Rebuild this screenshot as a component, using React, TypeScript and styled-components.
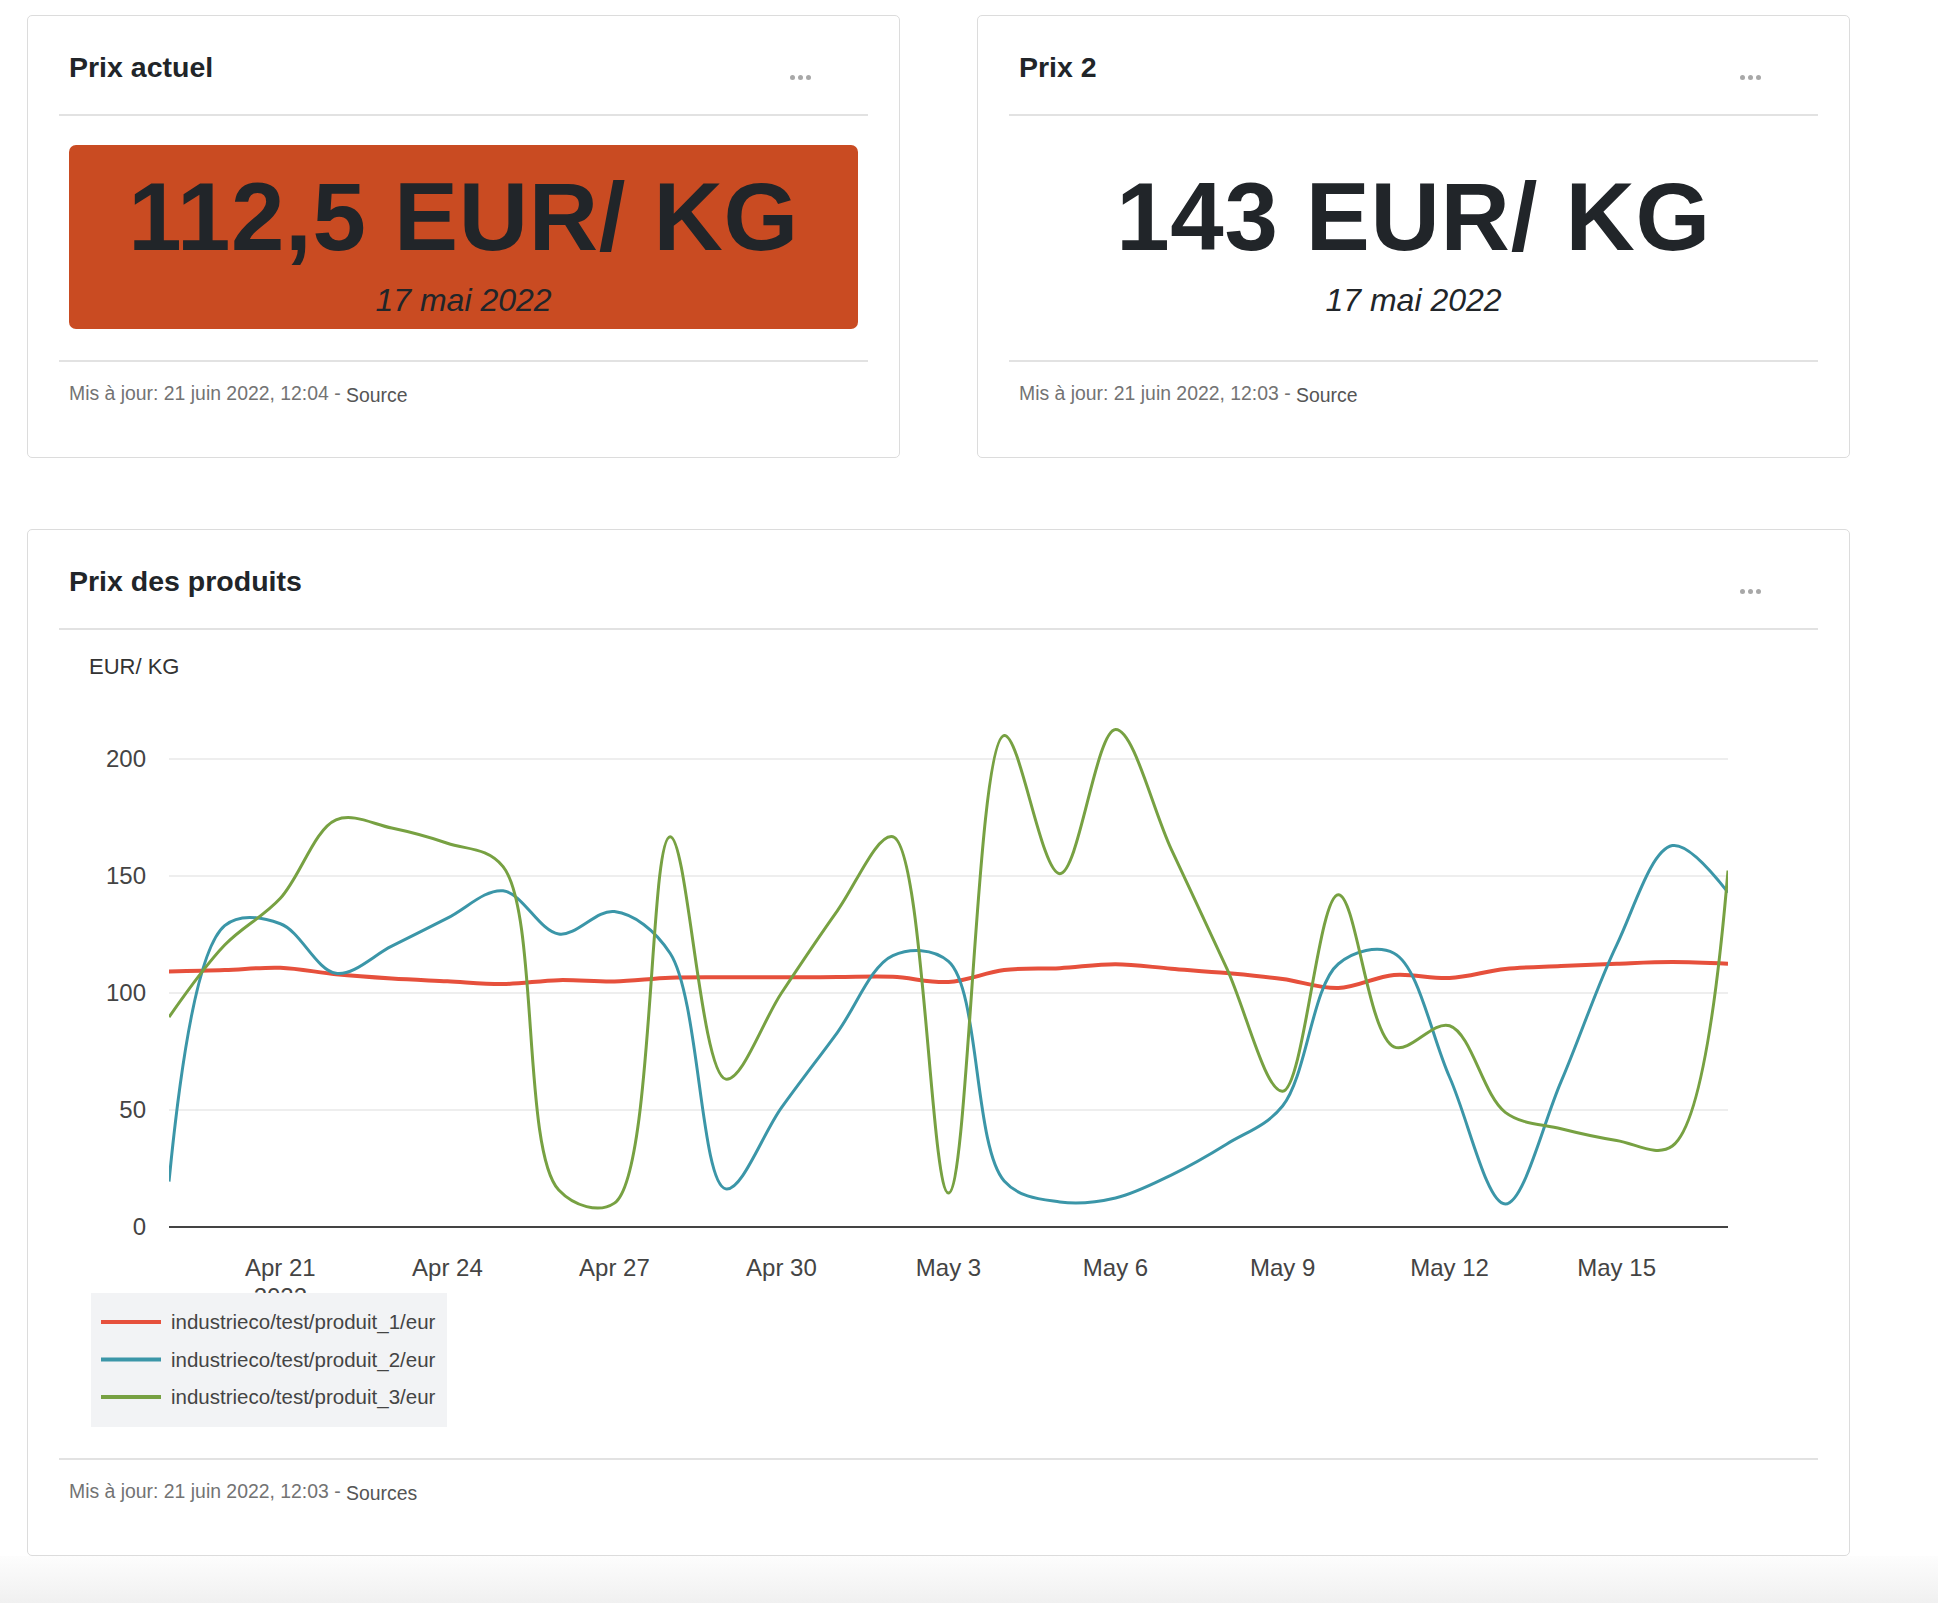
import styled, { createGlobalStyle } from "styled-components";

const GlobalStyle = createGlobalStyle`
  html, body {
    margin: 0;
    padding: 0;
    background: #fff;
  }
  body {
    font-family: "Liberation Sans", Arial, Helvetica, sans-serif;
    color: #212529;
  }
`;

type Pt = [number, number];

const COLORS = {
  p1: "#e6503c",
  p2: "#3b96a8",
  p3: "#77a142",
};

// one value per day, Apr 19 -> May 17
const SERIES = [
  {
    name: "industrieco/test/produit_1/eur",
    color: COLORS.p1,
    width: 4,
    values: [
      109.2, 109.8, 110.8, 108, 106.2, 105, 103.8, 105.5, 104.9, 106.5, 106.7,
      106.7, 106.8, 106.9, 104.7, 109.8, 110.6, 112.3, 110.4, 108.5, 106, 102.1,
      107.7, 106.4, 110.3, 111.5, 112.5, 113.2, 112.5,
    ],
  },
  {
    name: "industrieco/test/produit_2/eur",
    color: COLORS.p2,
    width: 3,
    values: [
      19.4, 128.8, 129.6, 108.4, 120, 132, 143.7, 125.2, 134.8, 117, 16.3, 51,
      83, 116, 113.5, 19.7, 10.7, 12.4, 22.2, 35.5, 51.7, 112.4, 117, 64, 9.8,
      62, 120.5, 163, 143,
    ],
  },
  {
    name: "industrieco/test/produit_3/eur",
    color: COLORS.p3,
    width: 3,
    values: [
      89.7, 120.5, 140.5, 174, 170.5, 164, 154, 15.8, 10.2, 166.8, 63.2, 100,
      135, 166.8, 14.5, 210, 151, 212.6, 161.5, 110.4, 58, 142, 77, 86, 49, 42,
      37, 34.6, 152.3,
    ],
  },
];

const TICKS = [
  { i: 2, label: "Apr 21" },
  { i: 5, label: "Apr 24" },
  { i: 8, label: "Apr 27" },
  { i: 11, label: "Apr 30" },
  { i: 14, label: "May 3" },
  { i: 17, label: "May 6" },
  { i: 20, label: "May 9" },
  { i: 23, label: "May 12" },
  { i: 26, label: "May 15" },
];

const CHART_W = 1759;
const CHART_H = 828;
const X0 = 110;
const X1 = 1669;
const Y0 = 597;
const PER_UNIT = 2.34;

const xAt = (i: number) => X0 + (i * (X1 - X0)) / 28;
const yAt = (v: number) => Y0 - v * PER_UNIT;

// same smoothing as plotly's "spline" line shape
function tangent(p0: Pt, p1: Pt, p2: Pt): [Pt, Pt] {
  const d1x = p0[0] - p1[0];
  const d1y = p0[1] - p1[1];
  const d2x = p2[0] - p1[0];
  const d2y = p2[1] - p1[1];
  const d1a = Math.pow(d1x * d1x + d1y * d1y, 0.25);
  const d2a = Math.pow(d2x * d2x + d2y * d2y, 0.25);
  const numx = d2a * d2a * d1x - d1a * d1a * d2x;
  const numy = d2a * d2a * d1y - d1a * d1a * d2y;
  const den1 = 3 * d2a * (d1a + d2a);
  const den2 = 3 * d1a * (d1a + d2a);
  return [
    [p1[0] + (den1 && numx / den1), p1[1] + (den1 && numy / den1)],
    [p1[0] - (den2 && numx / den2), p1[1] - (den2 && numy / den2)],
  ];
}

function smoothPath(pts: Pt[]) {
  const t: [Pt, Pt][] = [];
  for (let i = 1; i < pts.length - 1; i++) t.push(tangent(pts[i - 1], pts[i], pts[i + 1]));
  const f = (p: Pt) => `${p[0].toFixed(2)},${p[1].toFixed(2)}`;
  let d = `M${f(pts[0])}Q${f(t[0][0])} ${f(pts[1])}`;
  for (let i = 2; i < pts.length - 1; i++) {
    d += `C${f(t[i - 2][1])} ${f(t[i - 1][0])} ${f(pts[i])}`;
  }
  d += `Q${f(t[pts.length - 3][1])} ${f(pts[pts.length - 1])}`;
  return d;
}

function PriceChart() {
  return (
    <ChartSvg width={CHART_W} height={CHART_H}>
      <defs>
        <clipPath id="plot-area">
          <rect x={X0} y={0} width={X1 - X0} height={Y0 + 4} />
        </clipPath>
      </defs>
      <text x={30} y={44} fontSize={22} fill="#333">
        EUR/ KG
      </text>
      {[200, 150, 100, 50].map((v) => (
        <line key={v} x1={X0} x2={X1} y1={yAt(v)} y2={yAt(v)} stroke="#eee" strokeWidth={2} />
      ))}
      {[200, 150, 100, 50, 0].map((v) => (
        <text key={v} x={87} y={yAt(v) + 8} fontSize={24} fill="#444" textAnchor="end">
          {v}
        </text>
      ))}
      {TICKS.map((t) => (
        <text key={t.label} x={xAt(t.i)} y={646} fontSize={24} fill="#444" textAnchor="middle">
          {t.label}
        </text>
      ))}
      <text x={xAt(2)} y={675} fontSize={24} fill="#444" textAnchor="middle">
        2022
      </text>
      <g clipPath="url(#plot-area)">
        {SERIES.map((s) => (
          <path
            key={s.name}
            d={smoothPath(s.values.map((v, i) => [xAt(i), yAt(v)] as Pt))}
            fill="none"
            stroke={s.color}
            strokeWidth={s.width}
            strokeLinejoin="round"
          />
        ))}
      </g>
      <line x1={X0} x2={X1} y1={Y0} y2={Y0} stroke="#444" strokeWidth={2} />
      <rect x={32} y={663} width={356} height={134} fill="#f2f3f5" />
      {SERIES.map((s, k) => (
        <g key={s.name}>
          <line x1={42} x2={102} y1={692 + k * 37.5} y2={692 + k * 37.5} stroke={s.color} strokeWidth={4} />
          <text x={112} y={699 + k * 37.5} fontSize={20.5} fill="#444">
            {s.name}
          </text>
        </g>
      ))}
    </ChartSvg>
  );
}

function Dots() {
  return (
    <Menu type="button" aria-label="menu">
      <Dot />
      <Dot />
      <Dot />
    </Menu>
  );
}

function CardFooter({ updated, link }: { updated: string; link: string }) {
  return (
    <Footer>
      Mis à jour: {updated} - <SourceLink>{link}</SourceLink>
    </Footer>
  );
}

export default function App() {
  return (
    <Page>
      <GlobalStyle />
      <Content>
        <Row>
          <Card>
            <Header>
              <Title>Prix actuel</Title>
              <Dots />
            </Header>
            <Body>
              <PriceBox $alert>
                <Value>112,5 EUR/ KG</Value>
                <DateLine>17 mai 2022</DateLine>
              </PriceBox>
            </Body>
            <CardFooter updated="21 juin 2022, 12:04" link="Source" />
          </Card>
          <Card>
            <Header>
              <Title>Prix 2</Title>
              <Dots />
            </Header>
            <Body>
              <PriceBox>
                <Value>143 EUR/ KG</Value>
                <DateLine>17 mai 2022</DateLine>
              </PriceBox>
            </Body>
            <CardFooter updated="21 juin 2022, 12:03" link="Source" />
          </Card>
        </Row>
        <Card>
          <Header>
            <Title>Prix des produits</Title>
            <Dots />
          </Header>
          <ChartBody>
            <PriceChart />
          </ChartBody>
          <CardFooter updated="21 juin 2022, 12:03" link="Sources" />
        </Card>
      </Content>
      <BottomFade />
    </Page>
  );
}

const Page = styled.div`
  min-height: 100vh;
  display: flex;
  flex-direction: column;
  overflow: hidden;
`;

const Content = styled.main`
  width: 1823px;
  padding: 15px 0 0 27px;
  display: flex;
  flex-direction: column;
  gap: 71px;
`;

const Row = styled.div`
  display: grid;
  grid-template-columns: 873px 873px;
  column-gap: 77px;
`;

const Card = styled.section`
  background: #fff;
  border: 1px solid #dcdcdc;
  border-radius: 5px;
`;

const Header = styled.header`
  margin: 0 31px;
  padding: 34px 10px 30px;
  border-bottom: 2px solid #e2e2e2;
  display: flex;
  align-items: center;
  justify-content: space-between;
`;

const Title = styled.h2`
  margin: 0;
  font-size: 28.5px;
  line-height: 34px;
  font-weight: 700;
  color: #212529;
`;

const Menu = styled.button`
  margin: 20px 47px 0 0;
  padding: 0;
  border: 0;
  background: none;
  display: flex;
  gap: 3px;
  cursor: pointer;
`;

const Dot = styled.span`
  width: 5px;
  height: 5px;
  border-radius: 50%;
  background: #a8a8a8;
`;

const Body = styled.div`
  margin: 0 31px;
  padding: 29px 10px 31px;
`;

const PriceBox = styled.div<{ $alert?: boolean }>`
  box-sizing: border-box;
  height: 184px;
  padding-top: 24px;
  border-radius: 7px;
  background: ${(p) => (p.$alert ? "#c94b22" : "transparent")};
  text-align: center;
  color: #212529;
`;

const Value = styled.div`
  font-size: 96px;
  line-height: 95px;
  font-weight: 700;
  letter-spacing: 0.7px;
`;

const DateLine = styled.div`
  margin-top: 17px;
  font-size: 32px;
  line-height: 38px;
  font-style: italic;
`;

const ChartBody = styled.div`
  margin: 0 31px;
  height: ${CHART_H}px;
`;

const ChartSvg = styled.svg`
  display: block;
  font-family: "Liberation Sans", Arial, Helvetica, sans-serif;
`;

const Footer = styled.footer`
  margin: 0 31px;
  padding: 20px 10px 50px;
  border-top: 2px solid #e2e2e2;
  font-size: 19.4px;
  line-height: 23px;
  color: #737373;
`;

const SourceLink = styled.span`
  color: #555;
  vertical-align: -2px;
`;

const BottomFade = styled.div`
  flex: 1;
  min-height: 48px;
  background: linear-gradient(#fdfdfd, #f0f0f0);
`;
